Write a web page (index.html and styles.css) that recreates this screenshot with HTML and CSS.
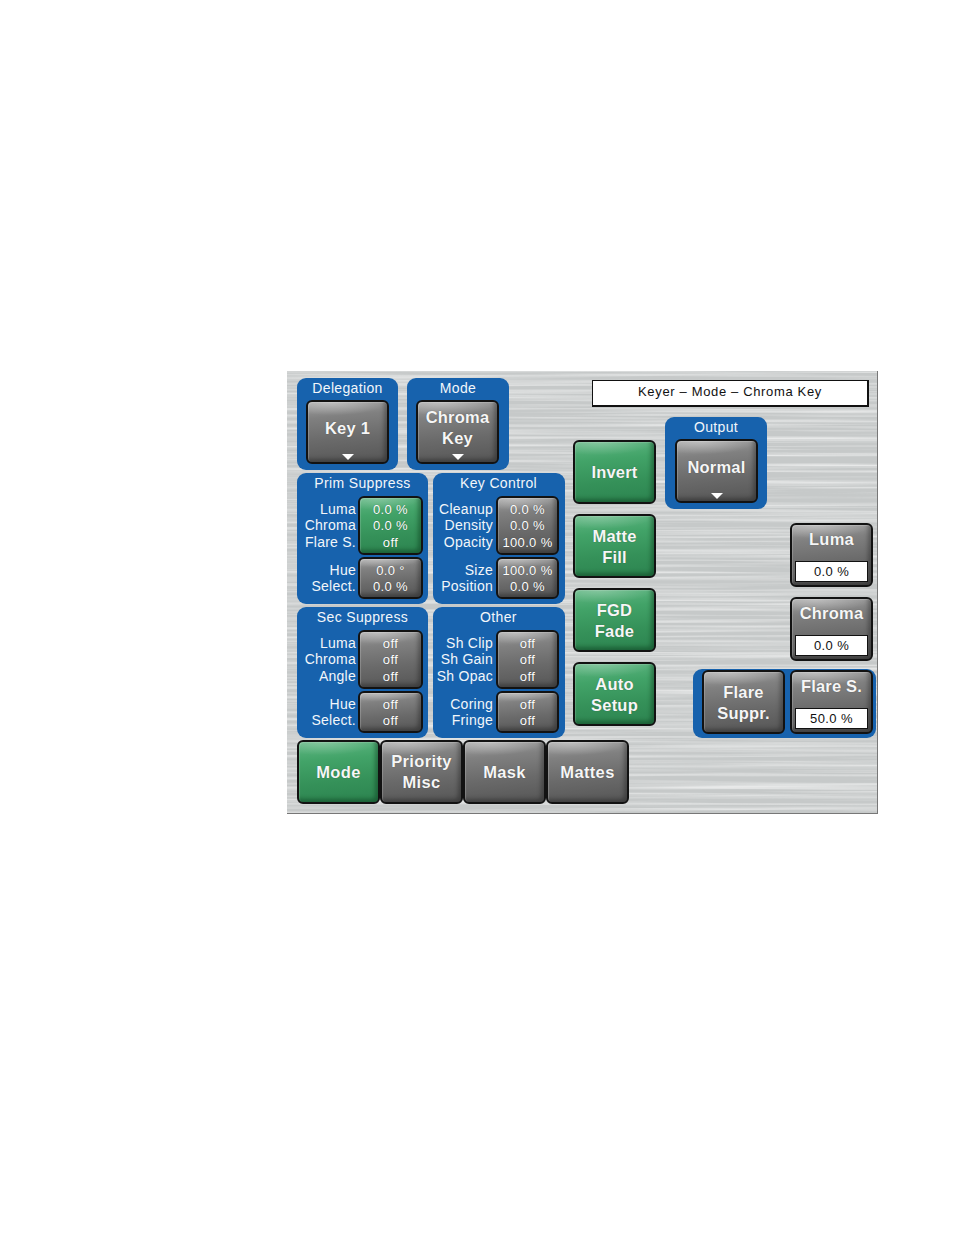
FILE: index.html
```html
<!DOCTYPE html>
<html>
  <head>
    <title>Keyer - Mode - Chroma Key</title>
    <link rel="stylesheet" href="styles.css">
  </head>
  <body>
    <div class="panel">
      <svg class="metal" width="591" height="443" aria-hidden="true">
        <filter id="brushed" x="0" y="0" width="100%" height="100%">
          <feTurbulence type="fractalNoise" baseFrequency="0.003 0.32" numOctaves="3" seed="7"/>
          <feColorMatrix type="matrix" values="0 0 0 0 1  0 0 0 0 1  0 0 0 0 1  2.2 0 0 0 -0.85"/>
          <feComponentTransfer>
            <feFuncA type="linear" slope="0.6"/>
          </feComponentTransfer>
        </filter>
        <rect width="591" height="443" fill="#c6c9c9"/>
        <rect width="591" height="443" filter="url(#brushed)"/>
      </svg>

      <div class="upper">
        <div class="groups">
          <div class="groups-top">
            <section class="group group-drop">
              <h3>Delegation</h3>
              <button class="btn btn-big">Key 1<i class="arrow"></i></button>
            </section>
            <section class="group group-drop group-mode">
              <h3>Mode</h3>
              <button class="btn btn-big">Chroma<br>Key<i class="arrow"></i></button>
            </section>
          </div>

          <div class="groups-grid">
            <section class="group group-params">
              <h3>Prim Suppress</h3>
              <div class="param">
                <div class="labels"><span>Luma</span><span>Chroma</span><span>Flare S.</span></div>
                <div class="btn btn-values btn-green"><span>0.0 %</span><span>0.0 %</span><span>off</span></div>
              </div>
              <div class="param param-two">
                <div class="labels"><span>Hue</span><span>Select.</span></div>
                <div class="btn btn-values"><span>0.0 °</span><span>0.0 %</span></div>
              </div>
            </section>

            <section class="group group-params">
              <h3>Key Control</h3>
              <div class="param">
                <div class="labels"><span>Cleanup</span><span>Density</span><span>Opacity</span></div>
                <div class="btn btn-values"><span>0.0 %</span><span>0.0 %</span><span>100.0 %</span></div>
              </div>
              <div class="param param-two">
                <div class="labels"><span>Size</span><span>Position</span></div>
                <div class="btn btn-values"><span>100.0 %</span><span>0.0 %</span></div>
              </div>
            </section>

            <section class="group group-params">
              <h3>Sec Suppress</h3>
              <div class="param">
                <div class="labels"><span>Luma</span><span>Chroma</span><span>Angle</span></div>
                <div class="btn btn-values"><span>off</span><span>off</span><span>off</span></div>
              </div>
              <div class="param param-two">
                <div class="labels"><span>Hue</span><span>Select.</span></div>
                <div class="btn btn-values"><span>off</span><span>off</span></div>
              </div>
            </section>

            <section class="group group-params">
              <h3>Other</h3>
              <div class="param">
                <div class="labels"><span>Sh Clip</span><span>Sh Gain</span><span>Sh Opac</span></div>
                <div class="btn btn-values"><span>off</span><span>off</span><span>off</span></div>
              </div>
              <div class="param param-two">
                <div class="labels"><span>Coring</span><span>Fringe</span></div>
                <div class="btn btn-values"><span>off</span><span>off</span></div>
              </div>
            </section>
          </div>
        </div>

        <div class="side">
          <div class="title-box">Keyer – Mode – Chroma Key</div>
          <div class="side-body">
            <div class="green-col">
              <button class="btn btn-big btn-green">Invert</button>
              <button class="btn btn-big btn-green">Matte<br>Fill</button>
              <button class="btn btn-big btn-green">FGD<br>Fade</button>
              <button class="btn btn-big btn-green">Auto<br>Setup</button>
            </div>
            <div class="right-col">
              <section class="group group-drop group-output">
                <h3>Output</h3>
                <button class="btn btn-big">Normal<i class="arrow"></i></button>
              </section>
              <div class="readout-stack">
                <div class="btn btn-big btn-readout">Luma<span class="readout">0.0 %</span></div>
                <div class="btn btn-big btn-readout">Chroma<span class="readout">0.0 %</span></div>
              </div>
              <div class="flare">
                <button class="btn btn-big">Flare<br>Suppr.</button>
                <div class="btn btn-big btn-readout">Flare S.<span class="readout">50.0 %</span></div>
              </div>
            </div>
          </div>
        </div>
      </div>

      <div class="tabs">
        <button class="btn btn-big btn-green">Mode</button>
        <button class="btn btn-big">Priority<br>Misc</button>
        <button class="btn btn-big">Mask</button>
        <button class="btn btn-big">Mattes</button>
      </div>
    </div>
  </body>
</html>
```

FILE: styles.css
```css
body {
  margin: 0;
  background: #fff;
  font-family: "Liberation Sans", Arial, sans-serif;
}
h3 {
  margin: 0;
  font: inherit;
}
.panel {
  position: relative;
  box-sizing: border-box;
  width: 591px;
  height: 443px;
  margin: 371px 0 0 287px;
  padding: 7px 0 0 10px;
  border-right: 1px solid #777;
  border-bottom: 1px solid #777;
  overflow: hidden;
}
.metal {
  position: absolute;
  left: 0;
  top: 0;
}
.upper {
  position: relative;
  display: flex;
  gap: 8px;
  height: 362px;
}
.groups {
  width: 268px;
}
.groups-top {
  display: flex;
  gap: 9px;
}
.groups-grid {
  display: grid;
  grid-template-columns: 131px 132px;
  gap: 3px 5px;
  margin-top: 3px;
}

/* blue group boxes */
.group {
  box-sizing: border-box;
  background: #1762ad;
  border-radius: 9px;
  color: #f2f6fa;
  font-size: 14px;
  letter-spacing: 0.35px;
  text-align: center;
}
.group h3 {
  height: 22px;
  line-height: 20px;
}
.group-drop {
  width: 101px;
  height: 92px;
  padding: 0 9px;
}
.group-drop .btn {
  padding-bottom: 8px;
}
.group-mode {
  width: 102px;
}
.group-params {
  height: 131px;
  padding: 0 5px 0 0;
}
.group-params h3 {
  margin-right: -5px;
}
.group-params:nth-child(even) {
  padding-right: 6px;
}
.group-params:nth-child(even) .btn-values {
  width: 63px;
}
.group-params:nth-child(even) .param {
  gap: 3px;
}
.param {
  display: flex;
  gap: 2px;
  height: 59px;
  margin-top: 1px;
}
.param-two {
  height: 42px;
  margin-top: 2px;
}
.labels {
  display: flex;
  flex-direction: column;
  justify-content: center;
  flex: 1;
  min-width: 0;
  text-align: right;
  line-height: 16.5px;
  letter-spacing: 0.25px;
  white-space: nowrap;
}

/* bevelled buttons */
.btn {
  position: relative;
  display: flex;
  box-sizing: border-box;
  flex-direction: column;
  align-items: center;
  justify-content: center;
  padding: 0;
  border: 2px solid #121212;
  border-radius: 6px;
  background:
    radial-gradient(ellipse 70% 22% at 30% 0, rgba(255, 255, 255, 0.35), transparent),
    linear-gradient(175deg, #a2a2a2 0, #808080 25%, #6a6a6a 60%, #565656 100%);
  box-shadow:
    inset 1px 1px 1px rgba(255, 255, 255, 0.22),
    inset -3px -3px 4px rgba(0, 0, 0, 0.3);
  color: #f6f6f6;
  text-shadow: 0 0 1px rgba(0, 0, 0, 0.4);
}
.btn-green {
  background:
    radial-gradient(ellipse 70% 22% at 30% 0, rgba(255, 255, 255, 0.25), transparent),
    linear-gradient(175deg, #5fb682 0, #42a368 30%, #359159 65%, #2c8450 100%);
  box-shadow:
    inset 1px 1px 1px rgba(255, 255, 255, 0.18),
    inset -3px -3px 4px rgba(0, 40, 15, 0.4);
}
.btn-big {
  flex: none;
  width: 83px;
  height: 64px;
  font-family: inherit;
  font-size: 16.5px;
  font-weight: bold;
  line-height: 21px;
  letter-spacing: 0.2px;
}
.btn-values {
  flex: none;
  width: 65px;
  height: 100%;
  padding-top: 2px;
  color: #fff;
  font-size: 13px;
  line-height: 16.5px;
  letter-spacing: 0.35px;
}
.arrow {
  position: absolute;
  left: 50%;
  bottom: 2px;
  margin-left: -6px;
  border-top: 6px solid #fff;
  border-left: 6px solid transparent;
  border-right: 6px solid transparent;
}

/* title and right side */
.side {
  width: 303px;
}
.title-box {
  box-sizing: border-box;
  width: 277px;
  height: 27px;
  margin: 2px 0 0 19px;
  background: #fff;
  border: 1px solid #111;
  border-right-width: 2px;
  border-bottom-width: 2px;
  color: #111;
  font-size: 13px;
  line-height: 22px;
  letter-spacing: 0.65px;
  text-align: center;
}
.side-body {
  display: flex;
  gap: 9px;
  margin-top: 10px;
}
.green-col {
  display: flex;
  flex-direction: column;
  gap: 10px;
  padding-top: 23px;
}
.green-col .btn {
  padding-top: 1px;
}
.right-col {
  width: 211px;
}
.group-output {
  width: 102px;
}
.group-output .btn {
  margin-left: 1px;
}
.readout-stack {
  display: flex;
  flex-direction: column;
  gap: 10px;
  margin: 14px 0 0 125px;
}
.btn-readout {
  justify-content: flex-start;
  padding-top: 4px;
  line-height: 21px;
}
.readout {
  box-sizing: border-box;
  width: 73px;
  height: 21px;
  margin-top: 11px;
  background: #fff;
  border: 1px solid #111;
  color: #111;
  font-size: 13px;
  font-weight: normal;
  line-height: 20px;
  letter-spacing: 0.4px;
  text-align: center;
  text-shadow: none;
}
.flare {
  display: flex;
  gap: 5px;
  box-sizing: border-box;
  width: 183px;
  height: 69px;
  margin: 8px 0 0 28px;
  padding: 1px 3px 0 9px;
  background: #1762ad;
  border-radius: 9px;
}
.flare > button {
  padding-top: 2px;
}
.tabs {
  position: relative;
  display: flex;
}
.tabs .btn {
  letter-spacing: 0.35px;
}
```
